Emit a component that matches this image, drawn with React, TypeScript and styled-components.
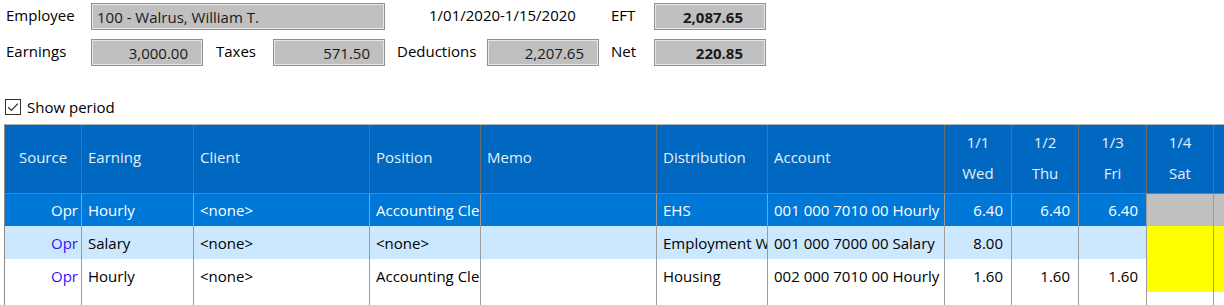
import React from 'react'
import styled, { createGlobalStyle } from 'styled-components'

type Column = {
  key: string
  width: number
  head: string
  sub?: string
  numeric?: boolean
  weekend?: boolean
  headAlign?: 'left' | 'center'
  bodyAlign?: 'left' | 'right'
}

type Row = {
  kind: 'selected' | 'alt' | 'plain'
  values: Record<string, string>
}

// last column sits past the window edge, its caption is out of view
const columns: Column[] = [
  { key: 'source', width: 77, head: 'Source', headAlign: 'center', bodyAlign: 'right' },
  { key: 'earning', width: 112, head: 'Earning' },
  { key: 'client', width: 176, head: 'Client' },
  { key: 'position', width: 111, head: 'Position' },
  { key: 'memo', width: 176, head: 'Memo' },
  { key: 'distribution', width: 111, head: 'Distribution' },
  { key: 'account', width: 177, head: 'Account' },
  { key: 'd1', width: 67, head: '1/1', sub: 'Wed', numeric: true },
  { key: 'd2', width: 67, head: '1/2', sub: 'Thu', numeric: true },
  { key: 'd3', width: 68, head: '1/3', sub: 'Fri', numeric: true },
  { key: 'd4', width: 67, head: '1/4', sub: 'Sat', numeric: true, weekend: true },
  { key: 'd5', width: 67, head: '', numeric: true, weekend: true },
]

const rows: Row[] = [
  {
    kind: 'selected',
    values: {
      source: 'Opr',
      earning: 'Hourly',
      client: '<none>',
      position: 'Accounting Clerk',
      distribution: 'EHS',
      account: '001 000 7010 00 Hourly',
      d1: '6.40',
      d2: '6.40',
      d3: '6.40',
    },
  },
  {
    kind: 'alt',
    values: {
      source: 'Opr',
      earning: 'Salary',
      client: '<none>',
      position: '<none>',
      distribution: 'Employment Works',
      account: '001 000 7000 00 Salary',
      d1: '8.00',
    },
  },
  {
    kind: 'plain',
    values: {
      source: 'Opr',
      earning: 'Hourly',
      client: '<none>',
      position: 'Accounting Clerk',
      distribution: 'Housing',
      account: '002 000 7010 00 Hourly',
      d1: '1.60',
      d2: '1.60',
      d3: '1.60',
    },
  },
]

const rowHeights = [32, 33, 33]

const rowBg = {
  selected: '#0078d7',
  alt: '#cce8ff',
  plain: '#ffffff',
}

export default function App() {
  return (
    <>
      <GlobalStyle />
      <Page>
        <Summary>
          <Label>Employee</Label>
          <Field $span={3}>100 - Walrus, William T.</Field>
          <Period>1/01/2020-1/15/2020</Period>
          <Label $pad={12}>EFT</Label>
          <Field $right $bold>2,087.65</Field>

          <Label>Earnings</Label>
          <Field $right>3,000.00</Field>
          <Label $pad={13}>Taxes</Label>
          <Field $right>571.50</Field>
          <Label $pad={12}>Deductions</Label>
          <Field $right>2,207.65</Field>
          <Label $pad={12}>Net</Label>
          <Field $right $bold>220.85</Field>
        </Summary>

        <ShowPeriod>
          <svg width="16" height="16" viewBox="0 0 16 16">
            <rect x="0.5" y="0.5" width="15" height="15" fill="#fff" stroke="#333" />
            <path d="M3.2 8.2 L6.4 11.4 L12.8 4.6" fill="none" stroke="#333" strokeWidth="1.3" />
          </svg>
          <span>Show period</span>
        </ShowPeriod>

        <GridWrap>
          <Grid $cols={columns.map((c) => c.width + 'px').join(' ')}>
            {columns.map((c) => (
              <HeadCell key={c.key} $align={c.numeric ? 'center' : c.headAlign || 'left'}>
                {c.sub ? (
                  <>
                    <span>{c.head}</span>
                    <span>{c.sub}</span>
                  </>
                ) : (
                  <span>{c.head}</span>
                )}
              </HeadCell>
            ))}

            {rows.map((r, i) =>
              columns.map((c) => {
                let bg = rowBg[r.kind]
                if (c.weekend) bg = r.kind === 'selected' ? '#c0c0c0' : '#ffff00'
                let color = r.kind === 'selected' ? '#ffffff' : '#000000'
                if (c.key === 'source' && r.kind !== 'selected') color = '#3311ff'
                return (
                  <Cell
                    key={i + c.key}
                    $h={rowHeights[i]}
                    $bg={bg}
                    $color={color}
                    $align={c.numeric ? 'right' : c.bodyAlign || 'left'}
                    $tight={c.key === 'source'}
                  >
                    {r.values[c.key] || ''}
                  </Cell>
                )
              })
            )}

            {columns.map((c) => (
              <Cell key={'f' + c.key} $h={20} $bg="#ffffff" $color="#000" $align="left" />
            ))}
          </Grid>
        </GridWrap>
      </Page>
    </>
  )
}

const GlobalStyle = createGlobalStyle`
  html, body {
    margin: 0;
    padding: 0;
    background: #ffffff;
    overflow: hidden;
  }
  body {
    font-family: "Open Sans", "Noto Sans", sans-serif;
    font-size: 15px;
    color: #000;
  }
`

const Page = styled.div`
  width: 1224px;
  height: 305px;
  overflow: hidden;
`

const Summary = styled.div`
  display: grid;
  grid-template-columns: 85px 112px 70px 112px 102px 112px 55px 112px;
  grid-template-rows: 27px 27px;
  row-gap: 9px;
  padding: 3px 0 0 6px;
  align-items: center;
`

const Label = styled.div<{ $pad?: number }>`
  padding-left: ${(p) => p.$pad || 0}px;
  white-space: nowrap;
  line-height: 20px;
  margin-top: -3px;
`

const Field = styled.div<{ $span?: number; $right?: boolean; $bold?: boolean }>`
  grid-column: span ${(p) => p.$span || 1};
  height: 27px;
  box-sizing: border-box;
  background: #c0c0c0;
  border: 1px solid #8f8f8f;
  box-shadow: inset 0 0 0 1px #e6e6e6;
  display: flex;
  align-items: center;
  justify-content: ${(p) => (p.$right ? 'flex-end' : 'flex-start')};
  padding: 0 ${(p) => (p.$right ? (p.$bold ? 22 : 14) : 5)}px 0 5px;
  font-weight: ${(p) => (p.$bold ? 700 : 400)};
  color: #1a1a1a;
  white-space: nowrap;
  overflow: hidden;
`

const Period = styled.div`
  grid-column: span 2;
  padding-left: 44px;
  margin-top: -3px;
  white-space: nowrap;
`

const ShowPeriod = styled.div`
  display: flex;
  align-items: center;
  gap: 6px;
  margin: 33px 0 0 5px;
  height: 16px;

  svg {
    flex: none;
  }

  span {
    line-height: 16px;
  }
`

const GridWrap = styled.div`
  margin: 9px 0 0 4px;
  overflow: hidden;
`

const Grid = styled.div<{ $cols: string }>`
  display: grid;
  grid-template-columns: ${(p) => p.$cols};
  width: max-content;
  border-top: 1px solid #b4b4b4;
  border-left: 1px solid #8a8a8a;
`

const HeadCell = styled.div<{ $align: 'left' | 'center' }>`
  height: 69px;
  box-sizing: border-box;
  background: #0068c0;
  color: #e4effa;
  border-right: 1px solid #6a6a6a;
  border-bottom: 1px solid #7a7a7a;
  display: flex;
  flex-direction: column;
  justify-content: center;
  align-items: ${(p) => (p.$align === 'center' ? 'center' : 'flex-start')};
  padding: 0 6px 4px;
  gap: 11px;
  white-space: nowrap;
  overflow: hidden;
`

const Cell = styled.div<{
  $h: number
  $bg: string
  $color: string
  $align: 'left' | 'right'
  $tight?: boolean
}>`
  height: ${(p) => p.$h}px;
  box-sizing: border-box;
  background: ${(p) => p.$bg};
  color: ${(p) => p.$color};
  border-right: 1px solid #9c9c9c;
  display: flex;
  align-items: center;
  justify-content: ${(p) => (p.$align === 'right' ? 'flex-end' : 'flex-start')};
  padding: ${(p) => (p.$tight ? '0 3px 0 4px' : p.$align === 'right' ? '0 8px 0 4px' : '0 4px 0 6px')};
  white-space: nowrap;
  overflow: hidden;
`
